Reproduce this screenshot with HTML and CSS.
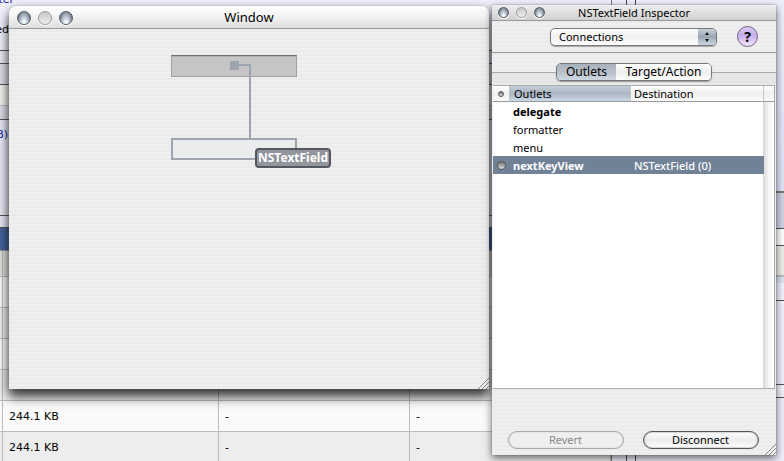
FILE: index.html
```
<!DOCTYPE html>
<html lang="en">
<head>
    <meta charset="UTF-8">
    <title>Window</title>
    <link rel="stylesheet" href="styles.css">
</head>
<body>
    <div class="desktop">
        <div class="page">
            <div class="page-left">
                <div class="band band-top">
                    <a class="cut" href="#">inter</a>
                    <span class="cut">ected</span>
                </div>
                <div class="band band-gap"></div>
                <div class="band band-head"></div>
                <div class="band band-cream"></div>
                <div class="band band-thin"></div>
                <div class="band band-body"><a class="cut" href="#">KB)</a></div>
                <div class="band band-foot"></div>
                <div class="band band-blue"></div>
                <table class="files">
                    <tr class="files-head"><td class="edge"></td><td></td><td></td><td></td></tr>
                    <tr><td></td><td></td><td></td><td></td></tr>
                    <tr class="even"><td></td><td></td><td></td><td></td></tr>
                    <tr><td></td><td></td><td></td><td></td></tr>
                    <tr class="even"><td></td><td></td><td></td><td></td></tr>
                    <tr><td></td><td>244.1 KB</td><td>-</td><td>-</td></tr>
                    <tr class="even"><td></td><td>244.1 KB</td><td>-</td><td>-</td></tr>
                </table>
            </div>
            <div class="page-rule"></div>
            <div class="page-space"></div>
            <div class="page-right">
                <div class="side side-top"></div>
                <div class="side side-head"></div>
                <div class="side side-white"></div>
                <div class="side side-cream"></div>
                <div class="side side-pale"></div>
                <div class="side side-body"></div>
                <div class="side side-gap"></div>
                <div class="side side-rest"></div>
            </div>
        </div>

        <div class="window main-window">
            <div class="titlebar">
                <div class="lights">
                    <button class="light" aria-label="Close"></button>
                    <button class="light off" aria-label="Minimize"></button>
                    <button class="light" aria-label="Zoom"></button>
                </div>
                <div class="title">Window</div>
            </div>
            <div class="canvas">
                <input class="field field-source" type="text" aria-label="Source field">
                <input class="field field-target" type="text" aria-label="Target field">
                <svg class="wire" width="22" height="78" viewBox="0 0 22 78">
                    <path d="M0 0h9v3h12v75h-2v-73h-10v4h-9z" fill="#9ea5b1"/>
                </svg>
                <div class="tag">NSTextField</div>
            </div>
            <svg class="grip" width="12" height="12" viewBox="0 0 12 12">
                <path d="M1 12L12 1M5 12L12 5M9 12L12 9" stroke="#888" fill="none"/>
            </svg>
        </div>

        <div class="window inspector">
            <div class="titlebar">
                <div class="lights">
                    <button class="light" aria-label="Close"></button>
                    <button class="light off" aria-label="Minimize"></button>
                    <button class="light" aria-label="Zoom"></button>
                </div>
                <div class="title">NSTextField Inspector</div>
            </div>
            <div class="toolbar">
                <div class="popup">
                    <select aria-label="Panel">
                        <option>Connections</option>
                    </select>
                    <svg class="arrows" width="18" height="16" viewBox="0 0 18 16">
                        <path d="M7 6L9 3L11 6zM7 10L9 13L11 10z" fill="#111"/>
                    </svg>
                </div>
                <button class="help">?</button>
            </div>
            <div class="tabs">
                <div class="tab-set">
                    <button class="tab on">Outlets</button>
                    <button class="tab">Target/Action</button>
                </div>
            </div>
            <div class="list">
                <table class="outlets">
                    <thead>
                        <tr>
                            <th class="col-dot"><span class="dot small"></span></th>
                            <th class="col-name">Outlets</th>
                            <th class="col-dest">Destination</th>
                            <th class="col-end"></th>
                        </tr>
                    </thead>
                    <tbody>
                        <tr><td></td><td class="bold">delegate</td><td></td><td class="end"></td></tr>
                        <tr><td></td><td>formatter</td><td></td><td class="end"></td></tr>
                        <tr><td></td><td>menu</td><td></td><td class="end"></td></tr>
                        <tr class="selected"><td><span class="dot"></span></td><td class="bold">nextKeyView</td><td class="dest">NSTextField (0)</td><td class="end"></td></tr>
                    </tbody>
                </table>
            </div>
            <div class="buttons">
                <button class="push" disabled>Revert</button>
                <button class="push">Disconnect</button>
            </div>
            <svg class="grip" width="12" height="12" viewBox="0 0 12 12">
                <path d="M1 12L12 1M5 12L12 5M9 12L12 9" stroke="#888" fill="none"/>
            </svg>
        </div>
    </div>
</body>
</html>
```
FILE: styles.css
```
*{
    box-sizing: border-box;
}
body{
    margin: 0;
    font-family: "Noto Sans", "Open Sans", sans-serif;
    font-size: 11px;
    color: #000;
}
button, input, select{
    font: inherit;
    color: inherit;
    margin: 0;
    padding: 0;
}
.desktop{
    position: relative;
    height: 100vh;
    overflow: hidden;
}

/* page behind the windows */
.page{
    display: grid;
    grid-template-columns: minmax(0, 1fr) 15px 9px 148px;
    height: 100%;
    background: #eeeefc;
}
.page-left{
    border-right: 1px solid #777;
    overflow: hidden;
    font-family: "DejaVu Sans", sans-serif;
}
.page-rule{
    border-right: 1px solid #444;
}
.page-space{
    border-right: 1px solid #444;
}
.band{
    border-bottom: 1px solid #555;
    background: #e8e8f6;
    overflow: hidden;
}
.cut{
    display: flex;
    justify-content: flex-end;
    width: 14px;
    color: #1a1a99;
    text-decoration: none;
    white-space: nowrap;
}
span.cut{
    width: 9px;
    margin-top: 18px;
    color: #000;
}
.band-top{
    height: 51px;
    background: #f0f0fd;
    line-height: 12px;
}
.band-top a{
    margin-top: -6px;
}
.band-gap{
    height: 13px;
}
.band-head{
    height: 21px;
    background: #dddde9;
}
.band-cream{
    height: 21px;
    background: #f0f0ec;
    border-color: #bbb;
}
.band-thin{
    height: 14px;
    background: #dddde9;
}
.band-body{
    height: 96px;
    padding-top: 8px;
}
.band-body .cut{
    width: 8px;
}
.band-foot{
    height: 12px;
}
.band-blue{
    height: 23px;
    background: #45639a;
    border-color: #999;
}
.files{
    width: 100%;
    table-layout: fixed;
    border-collapse: separate;
    border-spacing: 0;
}
.files td{
    height: 31px;
    padding: 0 6px;
    border-right: 1px solid #bbb;
    border-bottom: 1px solid #bbb;
    background: #fafafa;
}
.files .even td{
    background: #ededed;
}
.files .files-head td{
    height: 26px;
    width: 191px;
    background: #e2e1dc;
}
.files .files-head .edge{
    width: 3px;
}
.files .files-head td:nth-child(2){
    width: 216px;
}
.files .files-head td:last-child{
    width: auto;
}
.files td:first-child{
    padding: 0;
}
.side{
    border-bottom: 1px solid #555;
    background: #f0f0fe;
}
.side-top{
    height: 193px;
    background: linear-gradient(#eeeefc, #dfe4f8);
    border-bottom: 2px solid #777;
}
.side-head{
    height: 36px;
    background: #d0d2e5;
}
.side-white{
    height: 17px;
    background: #fff;
}
.side-cream{
    height: 31px;
    background: #eeeee8;
    border-bottom: 2px solid #bbb;
}
.side-pale{
    height: 24px;
    background: linear-gradient(#dde2f4 6px, #f0f0fe 6px);
}
.side-body{
    height: 84px;
}
.side-gap{
    height: 13px;
}
.side-rest{
    border: 0;
}

/* windows */
.window{
    position: absolute;
    display: flex;
    flex-direction: column;
    background: repeating-linear-gradient(#ebebeb 0, #ebebeb 2px, #efefef 2px, #efefef 4px);
}
.main-window{
    left: 9px;
    top: 6px;
    width: 480px;
    height: 383px;
    border-radius: 8px 8px 0 0;
    box-shadow: 0 0 1px #777, 0 2px 8px rgba(0, 0, 0, 0.3), 0 8px 12px rgba(0, 0, 0, 0.7);
}
.titlebar{
    position: relative;
    display: flex;
    align-items: center;
    justify-content: center;
    height: 23px;
    border-bottom: 1px solid #999;
    border-radius: 8px 8px 0 0;
    background: linear-gradient(#fff, #f6f6f6 40%, #dedede);
}
.title{
    font-size: 13px;
    line-height: 22px;
}
.lights{
    position: absolute;
    left: 8px;
    top: 5px;
    display: flex;
    gap: 7px;
}
.light{
    width: 14px;
    height: 14px;
    border: 1px solid #555d66;
    border-radius: 50%;
    background: radial-gradient(ellipse at 50% 100%, #f4fbff 15%, #aebac5 50%, #59636e 90%);
    box-shadow: 0 1px 0 #fff;
}
.light.off{
    border-color: #999;
    background: linear-gradient(#c8c8c8, #eee);
}
.canvas{
    position: relative;
    flex: 1;
}
.field{
    position: absolute;
    left: 162px;
    width: 126px;
    height: 22px;
    border-radius: 0;
}
.field-source{
    top: 26px;
    border: 1px solid #a0a0a0;
    border-top: 1px solid #707070;
    background: #c5c5c5;
    box-shadow: inset 0 1px 0 #b0b0b0;
}
.field-target{
    top: 109px;
    border: 2px solid #9ea5b1;
    background: #eaecee;
}
.wire{
    position: absolute;
    left: 221px;
    top: 32px;
}
.tag{
    position: absolute;
    left: 246px;
    top: 119px;
    padding: 0 1px;
    border: 2px solid #55585e;
    border-radius: 4px;
    background: rgba(137, 140, 149, 0.9);
    color: #fff;
    font-size: 12px;
    font-weight: bold;
    line-height: 16px;
}
.grip{
    position: absolute;
    right: 0;
    bottom: 0;
}

/* inspector */
.inspector{
    left: 492px;
    top: 5px;
    width: 284px;
    height: 450px;
    box-shadow: 0 0 1px #666, 0 3px 8px rgba(0, 0, 0, 0.6);
}
.inspector .titlebar{
    height: 16px;
    border-radius: 0;
    background: linear-gradient(#eee, #d0d0d0);
}
.inspector .title{
    font-size: 11px;
    line-height: 16px;
}
.inspector .lights{
    left: 6px;
    top: 2px;
}
.inspector .light{
    width: 11px;
    height: 11px;
}
.toolbar{
    display: flex;
    align-items: center;
    justify-content: flex-end;
    gap: 20px;
    height: 32px;
    padding-right: 18px;
    border-bottom: 1px solid #999;
}
.popup{
    position: relative;
    width: 167px;
    height: 18px;
}
.popup select{
    appearance: none;
    width: 100%;
    height: 100%;
    padding: 0 26px 0 8px;
    border: 1px solid #777;
    border-radius: 5px;
    background: linear-gradient(#fff, #f0f0f0 50%, #fff);
    box-shadow: 0 1px 1px #aaa;
    line-height: 16px;
}
.arrows{
    position: absolute;
    right: 1px;
    top: 1px;
    border-radius: 0 4px 4px 0;
    background: linear-gradient(#c8d0da, #9ba6b4 50%, #cdd8e4);
    pointer-events: none;
}
.help{
    width: 21px;
    height: 21px;
    border: 1px solid #6d6480;
    border-radius: 50%;
    background: linear-gradient(#d9c8f2, #c6aeee 45%, #f3e6ff);
    font-size: 14px;
    font-weight: bold;
    line-height: 18px;
}
.tabs{
    display: flex;
    justify-content: center;
    height: 32px;
    padding-top: 10px;
    /* group box line runs behind the tabs */
    background: linear-gradient(transparent 19px, #aaa 19px, #aaa 20px, rgba(0, 0, 0, 0.03) 20px);
}
.tab-set{
    display: flex;
    height: 18px;
    border: 1px solid #777;
    border-radius: 5px;
    box-shadow: 0 1px 1px #999;
    overflow: hidden;
}
.tab{
    width: 95px;
    border: 0;
    background: linear-gradient(#fff, #eee 50%, #fff);
    font-size: 12px;
    line-height: 16px;
}
.tab.on{
    width: 59px;
    background: linear-gradient(#a9b2bc, #b7bfc9 50%, #cfd8e2);
}
.list{
    flex: 1;
    margin: 0 1px;
    border: solid #aaa;
    border-width: 1px 1px 1px 0;
    background: linear-gradient(to right, #d8d8d8, #f4f4f4 50%, #fff) right / 11px 100% no-repeat #fff;
}
.outlets{
    width: 100%;
    table-layout: fixed;
    border-collapse: separate;
    border-spacing: 0;
}
.outlets th{
    height: 16px;
    padding: 0 3px;
    border-right: 1px solid #c4c4c4;
    border-bottom: 1px solid #999;
    background: linear-gradient(#fff, #f0f0f0 50%, #fafafa);
    font-weight: normal;
    line-height: 15px;
    text-align: left;
}
.outlets .col-dot{
    width: 17px;
    padding: 0 5px;
}
.outlets .col-name{
    width: 121px;
    padding-left: 4px;
    background: linear-gradient(#c4ced8, #aab5c1 50%, #cbd9e6);
}
.outlets .col-end{
    width: 10px;
    padding: 0;
    border-right: 0;
}
.outlets td{
    height: 18px;
    padding: 0 3px;
    line-height: 17px;
}
.outlets td:first-child{
    padding: 0 4px;
}
.outlets .bold{
    font-weight: bold;
}
.selected td{
    background: #718297;
    color: #fff;
}
.selected .dest{
    font-weight: 500;
}
.selected .end{
    background: none;
}
.dot{
    display: block;
    width: 9px;
    height: 9px;
    border: 1px solid #555;
    border-radius: 50%;
    background: linear-gradient(#777, #ddd);
}
.dot.small{
    width: 6px;
    height: 6px;
}
.buttons{
    display: flex;
    justify-content: center;
    gap: 19px;
    height: 66px;
    padding: 42px 2px 0 0;
}
.push{
    width: 116px;
    height: 18px;
    border: 1px solid #555;
    border-radius: 9px;
    background: linear-gradient(#fff, #ececec 50%, #fff);
    box-shadow: inset 0 0 2px #777;
    line-height: 16px;
}
.push:disabled{
    border-color: #aaa;
    background: #efefef;
    box-shadow: inset 0 0 2px #ccc;
    color: #888;
}
```
